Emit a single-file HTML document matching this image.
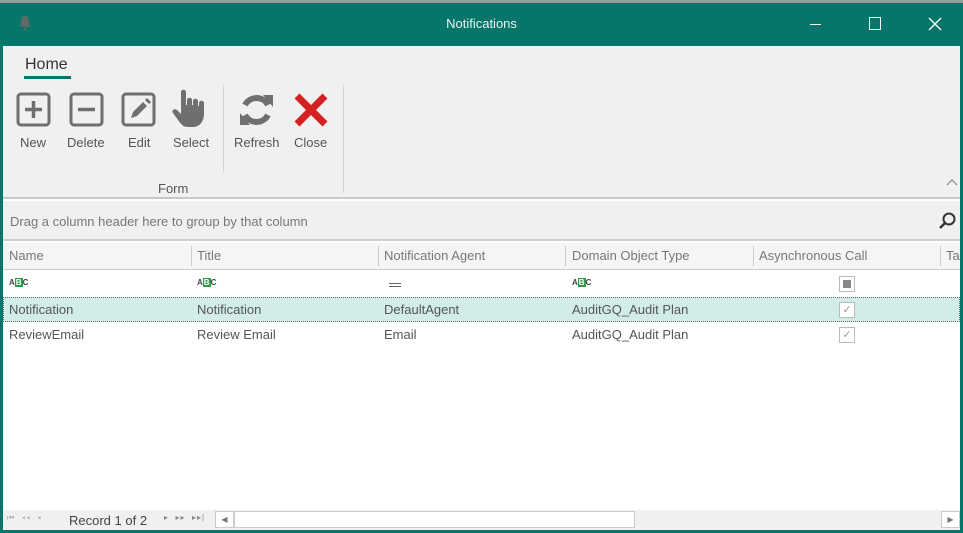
<!DOCTYPE html>
<html><head><style>
*{box-sizing:border-box;margin:0;padding:0}
body{width:963px;height:533px;overflow:hidden;background:#fff;font-family:"Liberation Sans",sans-serif;position:relative}
.a{position:absolute}
.t{font-size:13px;color:#555;white-space:nowrap}
.h{font-size:13px;color:#777;white-space:nowrap}
.lbl{font-size:13px;color:#555;position:absolute;top:135px;white-space:nowrap}
.abc{position:absolute;top:278px;font-size:8px;font-weight:bold;color:#444;letter-spacing:0}
.abc b{background:#2e9a4a;color:#fff;padding:0 1px}
.sep{position:absolute;top:246px;width:1px;height:20px;background:#ccc}
.cb{position:absolute;left:839px;width:16px;height:16px;border:1px solid #bbb;background:#fff}
</style></head><body>
<div class="a" style="left:0;top:0;width:963px;height:3px;background:#9a9a9a"></div>
<div class="a" style="left:0;top:3px;width:963px;height:43px;background:#07766a"></div>
<svg class="a" style="left:18px;top:15px" width="14" height="17" viewBox="0 0 14 17"><path d="M7 1 C3 1 3 5 3 8 L2 12 L12 12 L11 8 C11 5 11 1 7 1Z M6 13 h2 v2 h-2z" fill="#5f6a66"/></svg>
<div class="a" style="left:0;top:16px;width:963px;text-align:center;color:#e8f2f0;font-size:13px">Notifications</div>
<div class="a" style="left:810px;top:24px;width:11px;height:1px;background:#fff"></div>
<div class="a" style="left:869px;top:17px;width:12px;height:13px;border:1px solid #fff"></div>
<svg class="a" style="left:928px;top:17px" width="14" height="14"><path d="M1 1L13 13M13 1L1 13" stroke="#fff" stroke-width="1.3"/></svg>
<div class="a" style="left:0;top:46px;width:3px;height:487px;background:#07766a"></div>
<div class="a" style="left:960px;top:46px;width:3px;height:487px;background:#07766a"></div>
<div class="a" style="left:0;top:530px;width:963px;height:3px;background:#07766a"></div>
<div class="a" style="left:3px;top:46px;width:957px;height:153px;background:#f0f0f0;border-bottom:2px solid #c8c8c8"></div>
<div class="a" style="left:25px;top:56px;font-size:16px;color:#333">Home</div>
<div class="a" style="left:24px;top:76px;width:47px;height:3px;background:#07766a"></div>
<svg class="a" style="left:16px;top:92px" width="36" height="36"><rect x="2" y="2" width="31" height="31" rx="3" fill="none" stroke="#6f6f6f" stroke-width="3"/><path d="M17.5 9v17M9 17.5h17" stroke="#6f6f6f" stroke-width="3.5"/></svg>
<svg class="a" style="left:69px;top:92px" width="36" height="36"><rect x="2" y="2" width="31" height="31" rx="3" fill="none" stroke="#6f6f6f" stroke-width="3"/><path d="M9 17.5h17" stroke="#6f6f6f" stroke-width="3.5"/></svg>
<svg class="a" style="left:121px;top:92px" width="36" height="36"><rect x="2" y="2" width="31" height="31" rx="3" fill="none" stroke="#6f6f6f" stroke-width="3"/><path d="M10 26l2-6 10-10 4 4-10 10z M24 8l4 4 2-2-4-4z" fill="#6f6f6f"/></svg>
<svg class="a" style="left:172px;top:89px" width="40" height="40"><path d="M9 3c0-3 5-3 5 0v13h1v-5c0-3 5-3 5 0v5h1v-4c0-3 5-3 5 0v5h1v-3c0-3 5-3 5 0v11c0 8-5 13-11 13h-5c-5 0-7-3-10-7l-5-7c-2-3 2-5 4-3l4 4z" fill="#6f6f6f"/></svg>
<div class="a" style="left:223px;top:85px;width:1px;height:87px;background:#d4d4d4"></div>
<svg class="a" style="left:238px;top:91px" width="38" height="38"><path d="M30 14A13 13 0 0 0 7 14" fill="none" stroke="#6f6f6f" stroke-width="6"/><path d="M25 4l10 0 0 12z" fill="#6f6f6f"/><path d="M7 24A13 13 0 0 0 30 24" fill="none" stroke="#6f6f6f" stroke-width="6"/><path d="M12 34l-10 0 0-12z" fill="#6f6f6f"/></svg>
<svg class="a" style="left:293px;top:92px" width="36" height="36"><path d="M4 4L32 32M32 4L4 32" stroke="#d42020" stroke-width="7"/></svg>
<div class="a" style="left:343px;top:85px;width:1px;height:108px;background:#d4d4d4"></div>
<div class="lbl" style="left:20px">New</div>
<div class="lbl" style="left:67px">Delete</div>
<div class="lbl" style="left:128px">Edit</div>
<div class="lbl" style="left:173px">Select</div>
<div class="lbl" style="left:234px">Refresh</div>
<div class="lbl" style="left:294px">Close</div>
<div class="a t" style="left:158px;top:181px">Form</div>
<svg class="a" style="left:946px;top:178px" width="12" height="8"><path d="M1 7l5-5 5 5" fill="none" stroke="#888" stroke-width="1.2"/></svg>
<div class="a" style="left:3px;top:201px;width:957px;height:40px;background:#f0f0f0;border-bottom:2px solid #cfcfcf"></div>
<div class="a h" style="left:10px;top:214px">Drag a column header here to group by that column</div>
<svg class="a" style="left:938px;top:211px" width="20" height="20"><circle cx="11" cy="8" r="5.5" fill="none" stroke="#333" stroke-width="2"/><path d="M7 12l-5 5" stroke="#333" stroke-width="2.5"/></svg>
<div class="a" style="left:3px;top:243px;width:957px;height:27px;background:#f5f5f5;border-bottom:1px solid #ccc"></div>
<div class="a h" style="left:9px;top:248px">Name</div>
<div class="sep" style="left:191px"></div><div class="a h" style="left:197px;top:248px">Title</div>
<div class="sep" style="left:378px"></div><div class="a h" style="left:384px;top:248px">Notification Agent</div>
<div class="sep" style="left:565px"></div><div class="a h" style="left:572px;top:248px">Domain Object Type</div>
<div class="sep" style="left:753px"></div><div class="a h" style="left:759px;top:248px">Asynchronous Call</div>
<div class="sep" style="left:940px"></div><div class="a h" style="left:946px;top:248px">Ta</div>
<div class="abc" style="left:9px">A<b>B</b>C</div>
<div class="abc" style="left:197px">A<b>B</b>C</div>
<div class="a" style="left:389px;top:283px;width:12px;height:4px;border-top:1px solid #666;border-bottom:1px solid #666"></div>
<div class="abc" style="left:572px">A<b>B</b>C</div>
<div class="cb" style="top:276px"><div style="margin:3px;width:8px;height:8px;background:#888"></div></div>
<div class="a" style="left:3px;top:297px;width:957px;height:25px;background:#d2ede8;border:1px dotted #666"></div>
<div class="a t" style="left:9px;top:302px">Notification</div>
<div class="a t" style="left:197px;top:302px">Notification</div>
<div class="a t" style="left:384px;top:302px">DefaultAgent</div>
<div class="a t" style="left:572px;top:302px">AuditGQ_Audit Plan</div>
<div class="cb" style="top:302px;color:#999;font-size:11px;text-align:center;line-height:14px">✓</div>
<div class="a t" style="left:9px;top:327px">ReviewEmail</div>
<div class="a t" style="left:197px;top:327px">Review Email</div>
<div class="a t" style="left:384px;top:327px">Email</div>
<div class="a t" style="left:572px;top:327px">AuditGQ_Audit Plan</div>
<div class="cb" style="top:327px;color:#999;font-size:11px;text-align:center;line-height:14px">✓</div>
<div class="a" style="left:3px;top:510px;width:957px;height:20px;background:#f0f0f0"></div>
<div class="a" style="left:7px;top:513px;font-size:8px;color:#aaa;letter-spacing:1px">⏮ &nbsp;◂◂ &nbsp;◂</div>
<div class="a t" style="left:69px;top:513px;color:#444">Record 1 of 2</div>
<div class="a" style="left:164px;top:513px;font-size:8px;color:#888;letter-spacing:1px">▸ &nbsp;▸▸ &nbsp;▸▸|</div>
<div class="a" style="left:215px;top:511px;width:19px;height:17px;border:1px solid #ccc;background:#fff;font-size:8px;color:#777;text-align:center;line-height:15px">◀</div>
<div class="a" style="left:234px;top:511px;width:401px;height:17px;border:1px solid #ccc;background:#fff"></div>
<div class="a" style="left:941px;top:511px;width:19px;height:17px;border:1px solid #ccc;background:#fff;font-size:8px;color:#777;text-align:center;line-height:15px">▶</div>
</body></html>
